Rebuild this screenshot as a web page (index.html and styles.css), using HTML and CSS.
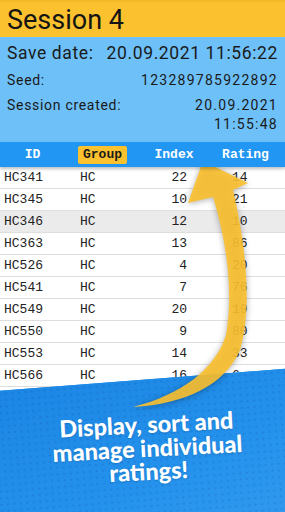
FILE: index.html
```html
<!DOCTYPE html>
<html>
<head>
<meta charset="utf-8">
<link rel="stylesheet" href="styles.css">
</head>
<body>
<div class="screen">
  <header class="title">Session 4</header>
  <section class="info">
    <div class="line big"><span>Save date:</span><span>20.09.2021 11:56:22</span></div>
    <div class="line"><span>Seed:</span><span class="num">123289785922892</span></div>
    <div class="line created"><span>Session created:</span><span class="num stack">20.09.2021<br>11:55:48</span></div>
  </section>
  <section class="table">
    <div class="thead">
      <span class="h-id">ID</span>
      <span class="h-group"><span class="pill">Group</span></span>
      <span class="h-index">Index</span>
      <span class="h-rating">Rating</span>
    </div>
    <div class="row"><span>HC341</span><span>HC</span><span class="idx">22</span><span class="rt">14</span></div>
    <div class="row"><span>HC345</span><span>HC</span><span class="idx">10</span><span class="rt">21</span></div>
    <div class="row alt"><span>HC346</span><span>HC</span><span class="idx">12</span><span class="rt">10</span></div>
    <div class="row"><span>HC363</span><span>HC</span><span class="idx">13</span><span class="rt">86</span></div>
    <div class="row"><span>HC526</span><span>HC</span><span class="idx">4</span><span class="rt">20</span></div>
    <div class="row"><span>HC541</span><span>HC</span><span class="idx">7</span><span class="rt">76</span></div>
    <div class="row"><span>HC549</span><span>HC</span><span class="idx">20</span><span class="rt">19</span></div>
    <div class="row"><span>HC550</span><span>HC</span><span class="idx">9</span><span class="rt">80</span></div>
    <div class="row"><span>HC553</span><span>HC</span><span class="idx">14</span><span class="rt">33</span></div>
    <div class="row"><span>HC566</span><span>HC</span><span class="idx">16</span><span class="rt">6</span></div>
    <div class="row"><span>HC570</span><span>HC</span><span class="idx">8</span><span class="rt">41</span></div>
  </section>
  <div class="promo"></div>
  <svg class="arrow" width="285" height="512" viewBox="0 0 285 512">
    <path d="M 203 161 L 248 183 L 233 190 C 247 250, 252 310, 240 350 C 225 385, 185 404, 133 407 C 180 395, 215 370, 226 335 C 234 290, 226 240, 213 197 L 188 203 Z" fill="#fbc02d" fill-opacity="0.9"/>
  </svg>
  <p class="slogan">Display, sort and<br>manage individual<br>ratings!</p>
</div>
</body>
</html>
```
FILE: styles.css
```css
html, body {
  margin: 0;
  padding: 0;
  background: #ffffff;
}
.screen {
  position: relative;
  width: 285px;
  height: 512px;
  overflow: hidden;
  font-family: Roboto, "Noto Sans", sans-serif;
  color: #1a1a1a;
}
.title {
  background: #fbc12e;
  border-top: 2px solid #f4b726;
  box-sizing: border-box;
  padding: 0 0 0 7px;
  font-size: 27px;
  line-height: 36px;
  height: 37px;
  color: #141414;
}
.info {
  background: #6ec0f8;
  height: 105px;
  padding: 4px 7px 0 7px;
  box-sizing: border-box;
}
.line {
  display: flex;
  justify-content: space-between;
  gap: 8px;
  white-space: nowrap;
  font-size: 14px;
  letter-spacing: 0.05em;
  line-height: 19px;
  margin-top: 6px;
}
.line.big {
  font-size: 17.5px;
  line-height: 24px;
  letter-spacing: 0.035em;
  margin-top: 0;
}
.line .num { letter-spacing: 0.09em; }
.line .stack { text-align: right; }
.table {
  font-family: "Liberation Mono", "DejaVu Sans Mono", monospace;
  font-size: 13px;
}
.thead {
  display: grid;
  grid-template-columns: 65px 75px 68px 1fr;
  align-items: center;
  height: 25px;
  background: #2196f3;
  color: #ffffff;
  font-weight: bold;
  position: relative;
  box-shadow: 0 2px 3px rgba(0,0,0,0.25);
  z-index: 1;
}
.h-id, .h-index, .h-rating { text-align: center; }
.h-rating { padding-right: 2px; }
.h-group { padding-left: 13px; }
.pill {
  display: inline-block;
  background: #fbc12e;
  color: #1a1a1a;
  border-radius: 2px;
  padding: 1px 5px;
  line-height: 16px;
}
.row {
  display: grid;
  grid-template-columns: 76px 70px 42px 1fr;
  height: 22px;
  box-sizing: border-box;
  border-bottom: 1px solid #dedede;
  align-items: center;
  color: #222222;
  background: #ffffff;
}
.row.alt { background: #ebebeb; }
.row span:first-child { padding-left: 4px; }
.row span:nth-child(2) { padding-left: 4px; }
.row .idx { text-align: right; padding-right: 1px; }
.row .rt { padding-left: 44px; }
.promo {
  position: absolute;
  left: -30px;
  top: 393px;
  width: 360px;
  height: 200px;
  transform: rotate(-4.4deg);
  transform-origin: 0 0;
  background-color: #1f8ce8;
  background-image:
    radial-gradient(circle, rgba(10, 60, 150, 0.22) 0.7px, transparent 1.3px),
    linear-gradient(160deg, #1b85e3 0%, #2492ec 50%, #3a9ef0 100%);
  background-size: 6.5px 6.5px, 100% 100%;
}
.arrow {
  position: absolute;
  left: 0;
  top: 0;
  filter: drop-shadow(0 1px 3px rgba(0,0,0,0.35));
}
.slogan {
  position: absolute;
  left: 20px;
  top: 413px;
  width: 255px;
  margin: 0;
  text-align: center;
  font-family: Lato, "Open Sans", sans-serif;
  font-weight: 900;
  font-size: 23.5px;
  line-height: 23.5px;
  color: #ffffff;
  transform: rotate(-3deg);
  text-shadow: 0 1px 2px rgba(0,0,0,0.15);
}
```
